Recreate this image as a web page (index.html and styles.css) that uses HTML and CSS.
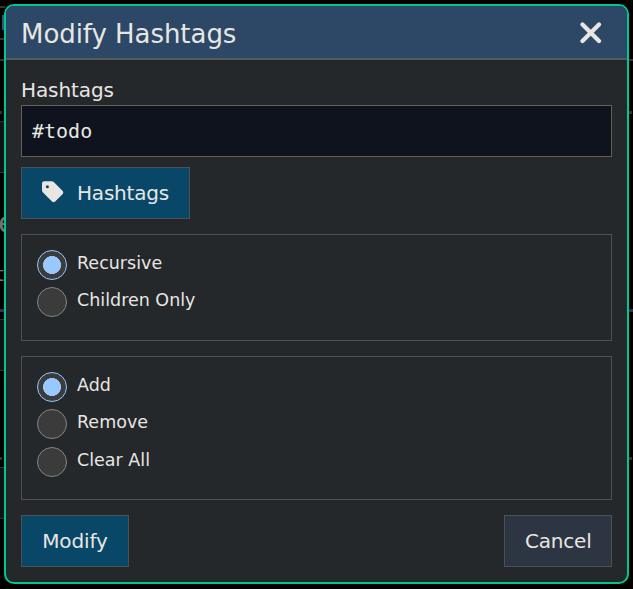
FILE: index.html
```html
<!DOCTYPE html>
<html lang="en">
<head>
<meta charset="utf-8">
<title>Modify Hashtags</title>
<link rel="stylesheet" href="styles.css">
</head>
<body>
<svg class="backdrop" width="633" height="589" viewBox="0 0 633 589" aria-hidden="true">
  <g fill="#333536">
    <rect x="0" y="6" width="5" height="2"/>
    <rect x="0" y="38" width="5" height="2"/>
    <rect x="0" y="59" width="633" height="2"/>
    <rect x="0" y="111" width="2" height="3"/>
    <rect x="629" y="111" width="3" height="3"/>
    <rect x="0" y="457" width="2" height="3"/>
    <rect x="629" y="457" width="3" height="3"/>
  </g>
  <rect x="2" y="15" width="3" height="15" fill="#2d5878"/>
  <g fill="#111415" stroke="#303334">
    <rect x="-5.5" y="121.5" width="20" height="51"/>
    <rect x="-5.5" y="319.5" width="20" height="51"/>
    <rect x="-5.5" y="467.5" width="20" height="51"/>
  </g>
  <rect x="0" y="309" width="633" height="3" fill="#253a52"/>
  <text class="backdrop-text" x="-2" y="233" font-size="30">e</text>
  <text class="backdrop-text" x="-4" y="281" font-size="20">t</text>
</svg>
<main class="dialog" role="dialog" aria-labelledby="title">
  <header class="dialog-header">
    <h1 class="dialog-title" id="title">Modify Hashtags</h1>
    <button class="close" aria-label="Close"><svg width="22" height="22" viewBox="0 0 22 22"><path d="M2.5 2.5 19 19M19 2.5 2.5 19"/></svg></button>
  </header>
  <div class="dialog-body">
    <label class="field-label" for="tags">Hashtags</label>
    <input class="field" id="tags" type="text" value="#todo">
    <button class="btn primary tag-btn"><svg class="tag-icon" width="22" height="22" viewBox="0 0 22 22"><path fill-rule="evenodd" d="M0 2.5Q0 .3 2.2.3H9.5Q11 .3 12 1.3L20.7 10Q22 11.5 20.7 13L13.2 20.6Q11.6 22 10 20.6L1 11.6Q0 10.6 0 9.2ZM5.4 4.2a1.55 1.55 0 1 0 0 3.1a1.55 1.55 0 1 0 0-3.1Z"/></svg>Hashtags</button>
    <div class="group" role="radiogroup">
      <label class="option"><input class="radio" type="radio" name="scope" checked><span class="option-text">Recursive</span></label>
      <label class="option"><input class="radio" type="radio" name="scope"><span class="option-text">Children Only</span></label>
    </div>
    <div class="group" role="radiogroup">
      <label class="option"><input class="radio" type="radio" name="action" checked><span class="option-text">Add</span></label>
      <label class="option"><input class="radio" type="radio" name="action"><span class="option-text">Remove</span></label>
      <label class="option"><input class="radio" type="radio" name="action"><span class="option-text">Clear All</span></label>
    </div>
    <footer class="actions">
      <button class="btn primary">Modify</button>
      <button class="btn cancel">Cancel</button>
    </footer>
  </div>
</main>
</body>
</html>
```
FILE: styles.css
```css
* { box-sizing: border-box; }
body {
  margin: 0;
  padding: 4px;
  height: 589px;
  overflow: hidden;
  background: #000;
  color: #e8e6e3;
  font-family: "DejaVu Sans", Verdana, sans-serif;
}
.backdrop { position: absolute; left: 0; top: 0; }
.backdrop-text { fill: #77736d; }
.dialog {
  position: relative;
  display: flex;
  flex-direction: column;
  height: 580px;
  border: 2px solid #00c791;
  border-radius: 10px;
  background: #24282a;
  overflow: hidden;
}
.dialog-header {
  display: flex;
  flex: none;
  align-items: center;
  justify-content: space-between;
  height: 54px;
  padding: 0 25px 0 15px;
  border-bottom: 2px solid #55595a;
  background: #2d4866;
}
.dialog-title { margin: 4px 0 0; font-size: 26px; line-height: 30px; font-weight: 400; letter-spacing: -0.05px; }
.close { display: block; padding: 0; border: 0; background: none; }
.close svg { display: block; stroke: #e8e6e3; stroke-width: 4.2; stroke-linecap: round; fill: none; margin-top: 1px; }
.dialog-body { display: flex; flex-direction: column; padding: 15px; }
.field-label { height: 30px; font-size: 20px; line-height: 30px; letter-spacing: -0.1px; }
.field {
  height: 52px;
  padding: 0 10px;
  border: 1px solid #665f55;
  border-radius: 0;
  outline: 0;
  background: #0f131e;
  color: #e8e6e3;
  font: 20px "DejaVu Sans Mono", monospace;
}
.btn {
  height: 52px;
  padding: 0 20px;
  border: 1px solid #4c5153;
  background: #2d3442;
  color: #e8e6e3;
  font: 20px "DejaVu Sans", Verdana, sans-serif;
}
.primary { width: 108px; background: #084768; letter-spacing: -0.1px; }
.cancel { width: 108px; letter-spacing: -0.2px; }
.tag-btn { display: flex; align-items: center; align-self: flex-start; gap: 13px; width: 169px; margin-top: 10px; letter-spacing: -0.2px; }
.tag-icon { flex: none; fill: #e8e6e3; margin-top: -2px; }
.group {
  display: flex;
  flex-direction: column;
  gap: 7.45px;
  margin-top: 15px;
  padding: 15px 15px 22.3px;
  border: 1px solid #4c5153;
}
.option { display: flex; gap: 10px; height: 30px; }
.radio {
  appearance: none;
  width: 30px;
  height: 30px;
  margin: 0;
  border: 1px solid #858585;
  border-radius: 50%;
  background: #3b3b3b;
}
.radio:checked {
  border-color: #99c8ff;
  background: radial-gradient(circle, #99c8ff 8.7px, #3b3b3b 9.3px);
}
.option-text { font-size: 17.5px; line-height: 26px; }
.actions { display: flex; justify-content: space-between; margin-top: 15px; }
```
